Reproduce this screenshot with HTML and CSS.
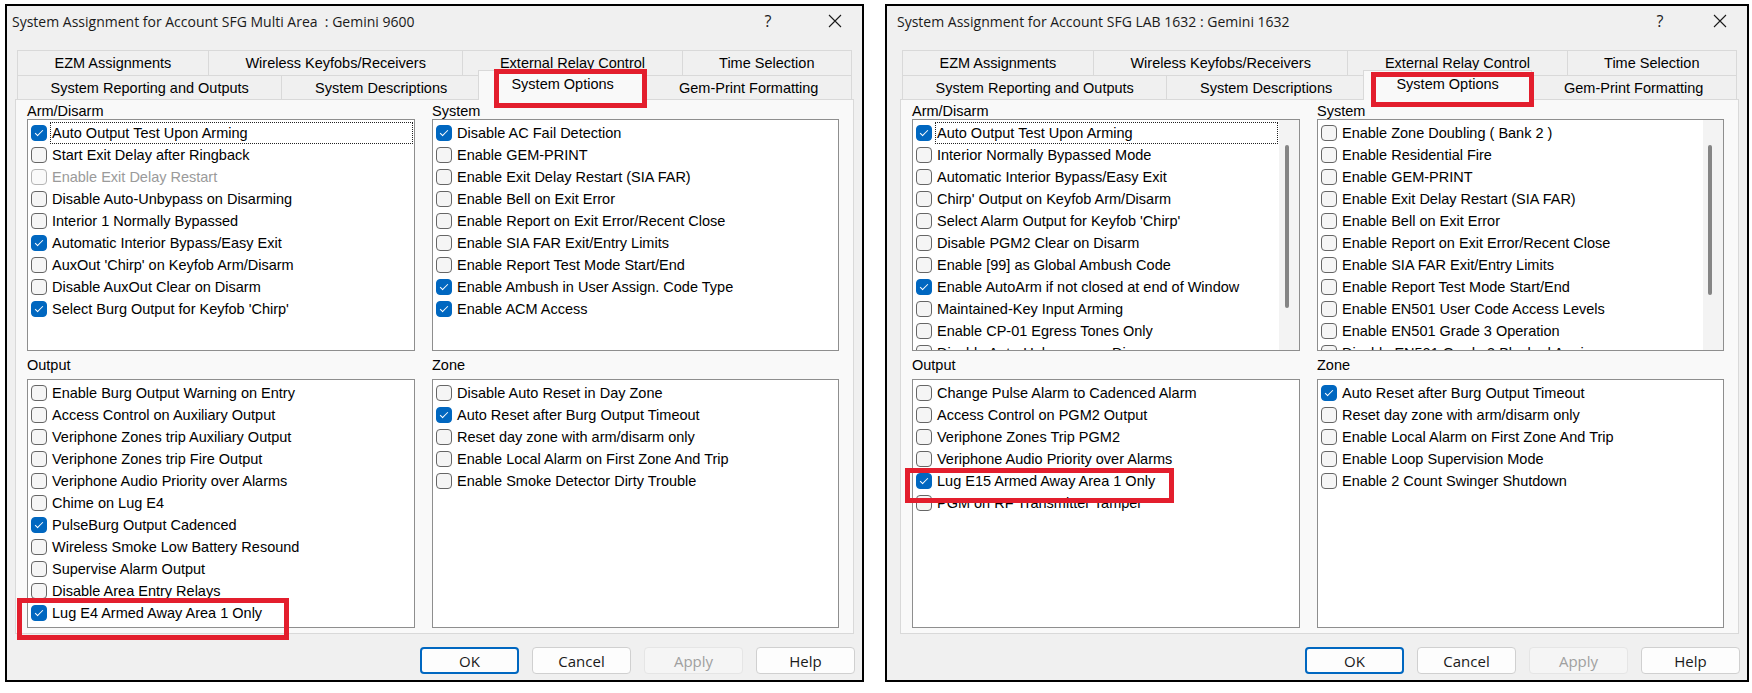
FILE: index.html
```html
<!DOCTYPE html>
<html lang="en">
<head>
    <meta charset="UTF-8">
    <meta name="viewport" content="width=device-width, initial-scale=1.0">
    <title>System Assignment</title>
    <link rel="stylesheet" href="styles.css">
</head>
<body>
<div class="screen">

    <!-- Gemini 9600 -->
    <div class="dialog dialog-a">
        <div class="titlebar">
            <span class="title">System Assignment for Account SFG Multi Area&nbsp; : Gemini 9600</span>
            <span class="help-btn">?</span>
            <span class="close-btn"><svg width="14" height="14" viewBox="0 0 14 14"><path d="M1 1L13 13M13 1L1 13" stroke="#1a1a1a" stroke-width="1.1" fill="none"/></svg></span>
        </div>
        <div class="tabctl">
            <div class="tabrow back">
                <div class="tab">EZM Assignments</div>
                <div class="tab">Wireless Keyfobs/Receivers</div>
                <div class="tab">External Relay Control</div>
                <div class="tab">Time Selection</div>
            </div>
            <div class="tabrow front">
                <div class="tab">System Reporting and Outputs</div>
                <div class="tab">System Descriptions</div>
                <div class="tab active">System Options</div>
                <div class="tab">Gem-Print Formatting</div>
            </div>
            <div class="panel">
                <div class="group">
                    <div class="group-title">Arm/Disarm</div>
                    <div class="listbox tall">
                        <div class="items">
                            <div class="item focus"><span class="box on"></span><span class="text">Auto Output Test Upon Arming</span></div>
                            <div class="item"><span class="box"></span><span class="text">Start Exit Delay after Ringback</span></div>
                            <div class="item disabled"><span class="box"></span><span class="text">Enable Exit Delay Restart</span></div>
                            <div class="item"><span class="box"></span><span class="text">Disable Auto-Unbypass on Disarming</span></div>
                            <div class="item"><span class="box"></span><span class="text">Interior 1 Normally Bypassed</span></div>
                            <div class="item"><span class="box on"></span><span class="text">Automatic Interior Bypass/Easy Exit</span></div>
                            <div class="item"><span class="box"></span><span class="text">AuxOut 'Chirp' on Keyfob Arm/Disarm</span></div>
                            <div class="item"><span class="box"></span><span class="text">Disable AuxOut Clear on Disarm</span></div>
                            <div class="item"><span class="box on"></span><span class="text">Select Burg Output for Keyfob 'Chirp'</span></div>
                        </div>
                    </div>
                </div>
                <div class="group">
                    <div class="group-title">System</div>
                    <div class="listbox tall">
                        <div class="items">
                            <div class="item"><span class="box on"></span><span class="text">Disable AC Fail Detection</span></div>
                            <div class="item"><span class="box"></span><span class="text">Enable GEM-PRINT</span></div>
                            <div class="item"><span class="box"></span><span class="text">Enable Exit Delay Restart (SIA FAR)</span></div>
                            <div class="item"><span class="box"></span><span class="text">Enable Bell on Exit Error</span></div>
                            <div class="item"><span class="box"></span><span class="text">Enable Report on Exit Error/Recent Close</span></div>
                            <div class="item"><span class="box"></span><span class="text">Enable SIA FAR Exit/Entry Limits</span></div>
                            <div class="item"><span class="box"></span><span class="text">Enable Report Test Mode Start/End</span></div>
                            <div class="item"><span class="box on"></span><span class="text">Enable Ambush in User Assign. Code Type</span></div>
                            <div class="item"><span class="box on"></span><span class="text">Enable ACM Access</span></div>
                        </div>
                    </div>
                </div>
                <div class="group lower">
                    <div class="group-title">Output</div>
                    <div class="listbox">
                        <div class="items">
                            <div class="item"><span class="box"></span><span class="text">Enable Burg Output Warning on Entry</span></div>
                            <div class="item"><span class="box"></span><span class="text">Access Control on Auxiliary Output</span></div>
                            <div class="item"><span class="box"></span><span class="text">Veriphone Zones trip Auxiliary Output</span></div>
                            <div class="item"><span class="box"></span><span class="text">Veriphone Zones trip Fire Output</span></div>
                            <div class="item"><span class="box"></span><span class="text">Veriphone Audio Priority over Alarms</span></div>
                            <div class="item"><span class="box"></span><span class="text">Chime on Lug E4</span></div>
                            <div class="item"><span class="box on"></span><span class="text">PulseBurg Output Cadenced</span></div>
                            <div class="item"><span class="box"></span><span class="text">Wireless Smoke Low Battery Resound</span></div>
                            <div class="item"><span class="box"></span><span class="text">Supervise Alarm Output</span></div>
                            <div class="item"><span class="box"></span><span class="text">Disable Area Entry Relays</span></div>
                            <div class="item"><span class="box on"></span><span class="text">Lug E4 Armed Away Area 1 Only</span></div>
                        </div>
                    </div>
                </div>
                <div class="group lower">
                    <div class="group-title">Zone</div>
                    <div class="listbox">
                        <div class="items">
                            <div class="item"><span class="box"></span><span class="text">Disable Auto Reset in Day Zone</span></div>
                            <div class="item"><span class="box on"></span><span class="text">Auto Reset after Burg Output Timeout</span></div>
                            <div class="item"><span class="box"></span><span class="text">Reset day zone with arm/disarm only</span></div>
                            <div class="item"><span class="box"></span><span class="text">Enable Local Alarm on First Zone And Trip</span></div>
                            <div class="item"><span class="box"></span><span class="text">Enable Smoke Detector Dirty Trouble</span></div>
                        </div>
                    </div>
                </div>
            </div>
        </div>
        <div class="buttons">
            <button class="btn default">OK</button>
            <button class="btn">Cancel</button>
            <button class="btn" disabled>Apply</button>
            <button class="btn">Help</button>
        </div>
        <div class="mark mark-tab"></div>
        <div class="mark mark-lug"></div>
    </div>

    <!-- Gemini 1632 -->
    <div class="dialog dialog-b">
        <div class="titlebar">
            <span class="title">System Assignment for Account SFG LAB 1632 : Gemini 1632</span>
            <span class="help-btn">?</span>
            <span class="close-btn"><svg width="14" height="14" viewBox="0 0 14 14"><path d="M1 1L13 13M13 1L1 13" stroke="#1a1a1a" stroke-width="1.1" fill="none"/></svg></span>
        </div>
        <div class="tabctl">
            <div class="tabrow back">
                <div class="tab">EZM Assignments</div>
                <div class="tab">Wireless Keyfobs/Receivers</div>
                <div class="tab">External Relay Control</div>
                <div class="tab">Time Selection</div>
            </div>
            <div class="tabrow front">
                <div class="tab">System Reporting and Outputs</div>
                <div class="tab">System Descriptions</div>
                <div class="tab active">System Options</div>
                <div class="tab">Gem-Print Formatting</div>
            </div>
            <div class="panel">
                <div class="group">
                    <div class="group-title">Arm/Disarm</div>
                    <div class="listbox tall">
                        <div class="items">
                            <div class="item focus"><span class="box on"></span><span class="text">Auto Output Test Upon Arming</span></div>
                            <div class="item"><span class="box"></span><span class="text">Interior Normally Bypassed Mode</span></div>
                            <div class="item"><span class="box"></span><span class="text">Automatic Interior Bypass/Easy Exit</span></div>
                            <div class="item"><span class="box"></span><span class="text">Chirp' Output on Keyfob Arm/Disarm</span></div>
                            <div class="item"><span class="box"></span><span class="text">Select Alarm Output for Keyfob 'Chirp'</span></div>
                            <div class="item"><span class="box"></span><span class="text">Disable PGM2 Clear on Disarm</span></div>
                            <div class="item"><span class="box"></span><span class="text">Enable [99] as Global Ambush Code</span></div>
                            <div class="item"><span class="box on"></span><span class="text">Enable AutoArm if not closed at end of Window</span></div>
                            <div class="item"><span class="box"></span><span class="text">Maintained-Key Input Arming</span></div>
                            <div class="item"><span class="box"></span><span class="text">Enable CP-01 Egress Tones Only</span></div>
                            <div class="item"><span class="box"></span><span class="text">Disable Auto-Unbypass on Disarm</span></div>
                        </div>
                        <div class="vscroll"><div class="thumb thumb-arm"></div></div>
                    </div>
                </div>
                <div class="group">
                    <div class="group-title">System</div>
                    <div class="listbox tall">
                        <div class="items">
                            <div class="item"><span class="box"></span><span class="text">Enable Zone Doubling ( Bank 2 )</span></div>
                            <div class="item"><span class="box"></span><span class="text">Enable Residential Fire</span></div>
                            <div class="item"><span class="box"></span><span class="text">Enable GEM-PRINT</span></div>
                            <div class="item"><span class="box"></span><span class="text">Enable Exit Delay Restart (SIA FAR)</span></div>
                            <div class="item"><span class="box"></span><span class="text">Enable Bell on Exit Error</span></div>
                            <div class="item"><span class="box"></span><span class="text">Enable Report on Exit Error/Recent Close</span></div>
                            <div class="item"><span class="box"></span><span class="text">Enable SIA FAR Exit/Entry Limits</span></div>
                            <div class="item"><span class="box"></span><span class="text">Enable Report Test Mode Start/End</span></div>
                            <div class="item"><span class="box"></span><span class="text">Enable EN501 User Code Access Levels</span></div>
                            <div class="item"><span class="box"></span><span class="text">Enable EN501 Grade 3 Operation</span></div>
                            <div class="item"><span class="box"></span><span class="text">Disable EN501 Grade 3 Blocked Arming</span></div>
                        </div>
                        <div class="vscroll"><div class="thumb thumb-sys"></div></div>
                    </div>
                </div>
                <div class="group lower">
                    <div class="group-title">Output</div>
                    <div class="listbox">
                        <div class="items">
                            <div class="item"><span class="box"></span><span class="text">Change Pulse Alarm to Cadenced Alarm</span></div>
                            <div class="item"><span class="box"></span><span class="text">Access Control on PGM2 Output</span></div>
                            <div class="item"><span class="box"></span><span class="text">Veriphone Zones Trip PGM2</span></div>
                            <div class="item"><span class="box"></span><span class="text">Veriphone Audio Priority over Alarms</span></div>
                            <div class="item"><span class="box on"></span><span class="text">Lug E15 Armed Away Area 1 Only</span></div>
                            <div class="item"><span class="box"></span><span class="text">PGM on RF Transmitter Tamper</span></div>
                        </div>
                    </div>
                </div>
                <div class="group lower">
                    <div class="group-title">Zone</div>
                    <div class="listbox">
                        <div class="items">
                            <div class="item"><span class="box on"></span><span class="text">Auto Reset after Burg Output Timeout</span></div>
                            <div class="item"><span class="box"></span><span class="text">Reset day zone with arm/disarm only</span></div>
                            <div class="item"><span class="box"></span><span class="text">Enable Local Alarm on First Zone And Trip</span></div>
                            <div class="item"><span class="box"></span><span class="text">Enable Loop Supervision Mode</span></div>
                            <div class="item"><span class="box"></span><span class="text">Enable 2 Count Swinger Shutdown</span></div>
                        </div>
                    </div>
                </div>
            </div>
        </div>
        <div class="buttons">
            <button class="btn default">OK</button>
            <button class="btn">Cancel</button>
            <button class="btn" disabled>Apply</button>
            <button class="btn">Help</button>
        </div>
        <div class="mark mark-tab"></div>
        <div class="mark mark-lug"></div>
    </div>

</div>
</body>
</html>
```

FILE: styles.css
```css
body {
    margin: 0;
    background-color: #fff;
    font-family: "Liberation Sans", Arial, sans-serif;
    font-size: 14.5px;
    color: #000;
}
.screen {
    display: flex;
    gap: 21px;
    padding: 4px 0 0 5px;
}
.dialog {
    position: relative;
    box-sizing: border-box;
    height: 678px;
    border: 2px solid #000;
    background-color: #f0f0f0;
    padding: 0 0 6px;
    display: flex;
    flex-direction: column;
}
.dialog-a {
    width: 859px;
}
.dialog-b {
    width: 864px;
    padding-left: 5px;
}

/* title bar */
.titlebar {
    display: flex;
    align-items: center;
    height: 30px;
    margin-bottom: 14px;
    padding-left: 5px;
    font-family: "Open Sans", sans-serif;
    font-size: 14px;
    color: #1a1a1a;
}
.title {
    flex: 1;
}
.help-btn {
    width: 80px;
    text-align: center;
    font-size: 16px;
}
.dialog-b .help-btn {
    width: 66px;
}
.close-btn {
    width: 54px;
    display: flex;
    justify-content: center;
}

/* tabs */
.tabctl {
    margin: 0 8px;
}
.tabrow {
    display: flex;
    padding: 0 2px;
}
.tabrow.back {
    height: 25px;
}
.tabrow.front {
    height: 24px;
}
.tab {
    flex: 1 1 auto;
    display: flex;
    align-items: center;
    justify-content: center;
    white-space: nowrap;
    background-color: #f0f0f0;
    border: 1px solid #d9d9d9;
    border-bottom: none;
    margin-right: -1px;
}
.tab:last-child {
    margin-right: 0;
}
.tab.active {
    position: relative;
    z-index: 1;
    margin: -5px -2px -1px;
    padding-bottom: 4px;
    background-color: #f9f9f9;
}
.panel {
    display: grid;
    grid-template-columns: 388px 407px;
    column-gap: 17px;
    align-content: start;
    background-color: #f9f9f9;
    border: 1px solid #d9d9d9;
    padding: 3px 14px 5px 11px;
}
.group-title {
    height: 16px;
    line-height: 16px;
}
.group.lower {
    margin-top: 6px;
}
.group.lower .group-title {
    margin-bottom: 6px;
}

/* list boxes */
.listbox {
    display: flex;
    height: 249px;
    box-sizing: border-box;
    border: 1px solid #8e8e8e;
    background-color: #fff;
    overflow: hidden;
}
.listbox.tall {
    height: 232px;
}
.items {
    flex: 1;
    padding: 2px 1px 0 3px;
    overflow: hidden;
}
.item {
    display: flex;
    align-items: center;
    height: 22px;
    white-space: nowrap;
}
.box {
    position: relative;
    flex: none;
    box-sizing: border-box;
    width: 16px;
    height: 16px;
    border: 1px solid #666;
    border-radius: 4px;
    background-color: #f5f5f5;
    margin-right: 3px;
}
.box.on {
    background-color: #0067c0;
    border-color: #0067c0;
}
.box.on::after {
    content: "";
    position: absolute;
    left: 5px;
    top: 2px;
    width: 3px;
    height: 7px;
    border: solid #fff;
    border-width: 0 1.3px 1.3px 0;
    transform: rotate(45deg);
}
.text {
    flex: 1;
    line-height: 20px;
    padding-left: 1px;
    border: 1px dotted transparent;
}
.item.focus .text {
    border-color: #222;
}
.item.disabled {
    color: #9a9a9a;
}
.item.disabled .box {
    border-color: #b5b5b5;
    background-color: #fafafa;
}
.vscroll {
    flex: none;
    width: 20px;
    background-color: #f3f3f3;
}
.thumb {
    width: 4px;
    margin-left: 6px;
    border-radius: 2px;
    background-color: #858585;
}
.thumb-arm {
    margin-top: 25px;
    height: 163px;
}
.thumb-sys {
    margin-top: 25px;
    height: 150px;
    margin-left: 5px;
}

/* buttons */
.buttons {
    display: flex;
    justify-content: flex-end;
    gap: 13px;
    margin: 13px 7px 0 0;
}
.btn {
    width: 99px;
    height: 27px;
    box-sizing: border-box;
    border: 1px solid #d0d0d0;
    border-radius: 4px;
    background-color: #fdfdfd;
    font-family: "Open Sans", sans-serif;
    font-size: 15px;
    color: #1a1a1a;
    padding: 0;
}
.btn.default {
    border: 2px solid #0067c0;
}
.btn:disabled {
    background-color: #f5f5f5;
    border-color: #e5e5e5;
    color: #a0a0a0;
}

/* red annotation boxes */
.mark {
    position: absolute;
    box-sizing: border-box;
    border: 5px solid #e31e2d;
    z-index: 5;
}
.dialog-a .mark-tab { left: 487px; top: 63px; width: 153px; height: 39px; }
.dialog-a .mark-lug { left: 10px; top: 592px; width: 272px; height: 42px; }
.dialog-b .mark-tab { left: 484px; top: 66px; width: 163px; height: 35px; }
.dialog-b .mark-lug { left: 18px; top: 462px; width: 269px; height: 35px; }
```
